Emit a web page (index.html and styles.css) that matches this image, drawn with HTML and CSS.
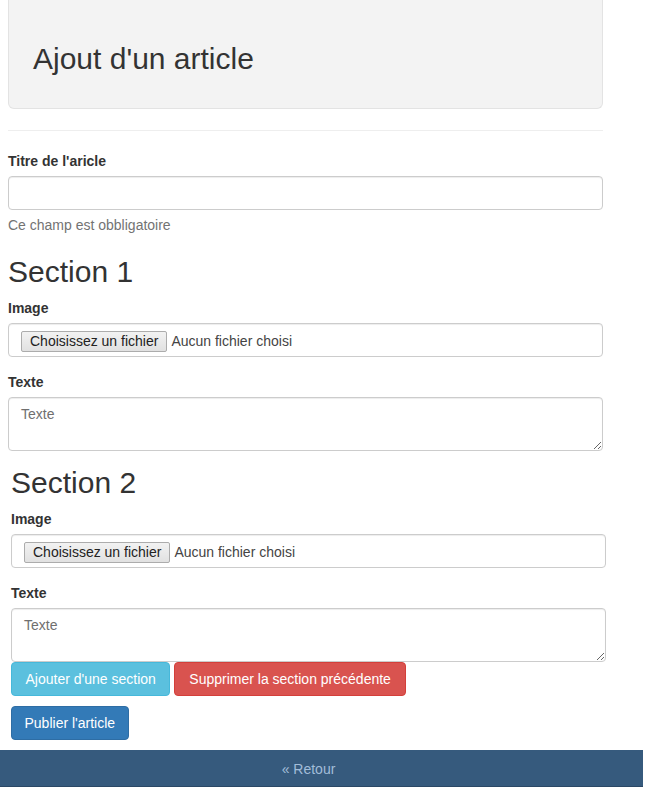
FILE: index.html
```html
<!DOCTYPE html>
<html lang="fr">
<head>
<meta charset="utf-8">
<title>Ajout d'un article</title>
<link rel="stylesheet" href="styles.css">
</head>
<body>
<div class="page">
  <div class="jumbotron">
    <h1 class="jumbo-title">Ajout d'un article</h1>
  </div>
  <hr class="sep">
  <form class="article-form">
    <div class="group">
      <label class="label">Titre de l'aricle</label>
      <input class="control" type="text">
      <p class="help">Ce champ est obbligatoire</p>
    </div>

    <div class="section">
      <h2 class="section-title">Section 1</h2>
      <div class="group">
        <label class="label">Image</label>
        <div class="control file-control">
          <span class="file-btn">Choisissez un fichier</span>
          <span class="file-name">Aucun fichier choisi</span>
        </div>
      </div>
      <div class="group">
        <label class="label">Texte</label>
        <textarea class="control area" rows="2" placeholder="Texte"></textarea>
      </div>
    </div>

    <div class="section section-shift">
      <h2 class="section-title">Section 2</h2>
      <div class="group">
        <label class="label">Image</label>
        <div class="control file-control">
          <span class="file-btn">Choisissez un fichier</span>
          <span class="file-name">Aucun fichier choisi</span>
        </div>
      </div>
      <div class="group">
        <label class="label">Texte</label>
        <textarea class="control area" rows="2" placeholder="Texte"></textarea>
      </div>
    </div>

    <div class="actions">
      <button type="button" class="btn btn-info">Ajouter d'une section</button>
      <button type="button" class="btn btn-danger">Supprimer la section précédente</button>
    </div>
    <div class="publish">
      <button type="button" class="btn btn-primary">Publier l'article</button>
    </div>
  </form>
</div>
<footer class="footer">
  <span class="footer-link">« Retour</span>
</footer>
</body>
</html>
```
FILE: styles.css
```css
* { box-sizing: border-box; }

html, body {
  margin: 0;
  padding: 0;
  background: #fff;
}

body {
  font-family: "Liberation Sans", Arial, sans-serif;
  font-size: 14px;
  line-height: 20px;
  color: #333;
}

.page {
  padding: 0 45px 0 8px;
}

.jumbotron {
  background: #f3f3f3;
  border: 1px solid #e3e3e3;
  border-top: 0;
  border-radius: 0 0 6px 6px;
  padding: 42px 24px 33px;
}

.jumbo-title {
  margin: 0;
  font-size: 30px;
  line-height: 33px;
  font-weight: 400;
  color: #333;
}

.sep {
  margin: 21px 0 20px;
  border: 0;
  border-top: 1px solid #eee;
  height: 0;
}

.article-form {
  margin: 0;
}

.group {
  margin-bottom: 15px;
}

.section .group:last-child {
  margin-bottom: 0;
}

.section {
  margin-top: 20px;
}

.section + .section {
  margin-top: 15px;
}

.section-shift {
  margin-left: 3px;
  margin-right: -3px;
}

.label {
  display: block;
  font-weight: 700;
  margin-bottom: 5px;
}

.control {
  display: block;
  width: 100%;
  height: 34px;
  padding: 6px 12px;
  font-family: "Liberation Sans", Arial, sans-serif;
  font-size: 14px;
  line-height: 20px;
  color: #555;
  background: #fff;
  border: 1px solid #ccc;
  border-radius: 4px;
  box-shadow: inset 0 1px 1px rgba(0, 0, 0, .075);
  margin: 0;
}

.area {
  height: 54px;
  resize: vertical;
}

.area::placeholder {
  color: #6f6f6f;
  opacity: 1;
}

.help {
  margin: 5px 0 0;
  color: #737373;
}

.file-control {
  display: flex;
  align-items: flex-start;
  padding: 7px 12px 0;
}

.file-btn {
  display: block;
  height: 21px;
  padding: 0 8px;
  line-height: 19px;
  border: 1px solid #acacac;
  border-radius: 2px;
  background: linear-gradient(#f2f2f2, #e1e1e1);
  color: #222;
  white-space: nowrap;
}

.file-name {
  display: block;
  margin-left: 4px;
  line-height: 21px;
  color: #444;
  white-space: nowrap;
}

.section-title {
  margin: 0 0 10px;
  font-size: 30px;
  line-height: 33px;
  font-weight: 400;
  color: #333;
}

.actions {
  display: flex;
  gap: 4px;
  margin-left: 3px;
}

.publish {
  margin-top: 10px;
  margin-left: 3px;
}

.btn {
  display: inline-block;
  padding: 6px 13px;
  font-family: "Liberation Sans", Arial, sans-serif;
  font-size: 14px;
  line-height: 20px;
  color: #fff;
  border: 1px solid transparent;
  border-radius: 4px;
  white-space: nowrap;
  cursor: pointer;
}

.btn-info {
  padding: 6px 13.5px;
  background: #5bc0de;
  border-color: #46b8da;
}

.btn-danger {
  padding: 6px 14px;
  background: #d9534f;
  border-color: #d43f3a;
}

.btn-primary {
  padding: 6px 12.5px;
  background: #337ab7;
  border-color: #2e6da4;
}

.footer {
  width: 643px;
  margin-top: 10px;
  padding: 9px 37px 7px 11px;
  background: #365a7d;
  border-bottom: 1px solid #2b4866;
  text-align: center;
}

.footer-link {
  color: #a2bdd9;
}
```
